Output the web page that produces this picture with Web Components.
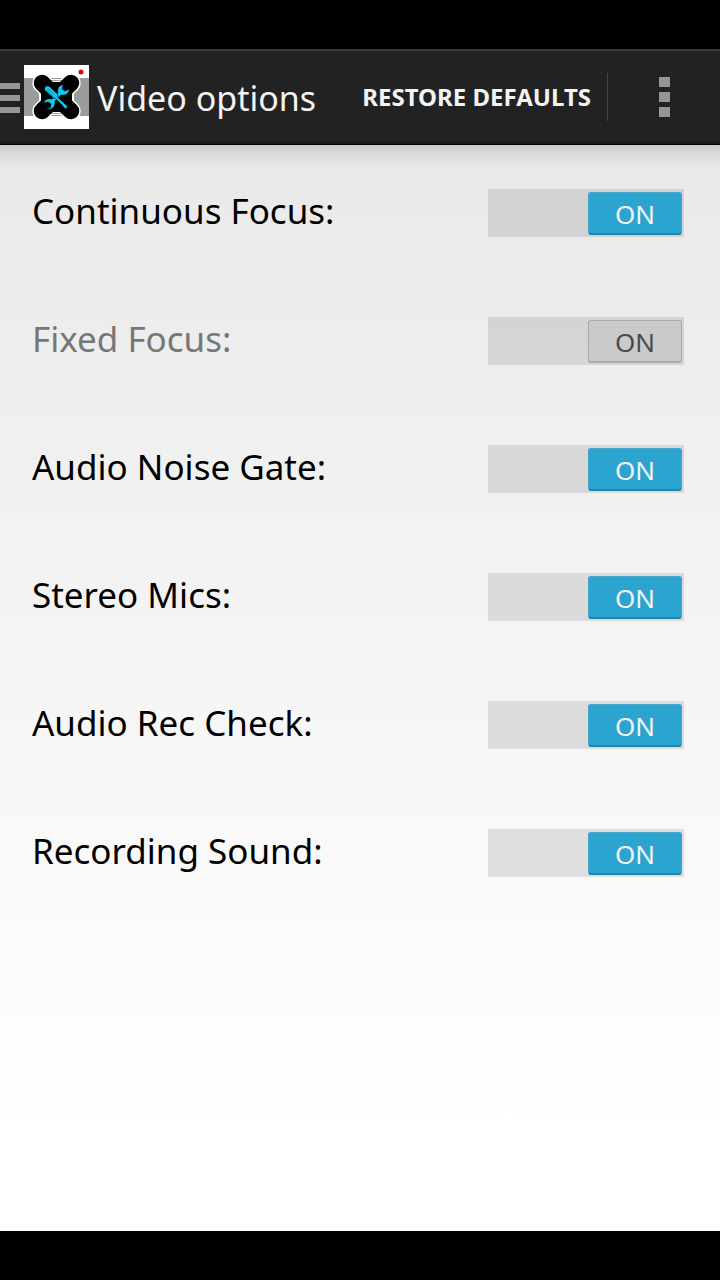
<!DOCTYPE html>
<html lang="en">
<head>
<meta charset="utf-8">
<meta name="viewport" content="width=device-width, initial-scale=1">
<title>Video options</title>
<style>
  html, body { margin: 0; background: #000; }
  body { font-family: "Noto Sans", sans-serif; }
</style>
</head>
<body>
<video-options-screen></video-options-screen>

<script>
class VideoOptionsScreen extends HTMLElement {
  constructor() {
    super();
    this.attachShadow({ mode: "open" }).innerHTML = `
      <style>
        :host { display: flex; flex-direction: column; box-sizing: border-box; min-height: 100vh; padding: 49px 0; background: #000; }
        main { flex: 1; padding: 4px 36px 32px 32px; background: linear-gradient(#0002, #0001 8px, #0000 24px), linear-gradient(#e9e9e9, #ebebeb 8%, #fff 90%); }
      </style>
      <action-bar heading="Video options">
        <app-logo slot="logo"></app-logo>
        <bar-action slot="actions">RESTORE DEFAULTS</bar-action>
        <overflow-button slot="actions"></overflow-button>
      </action-bar>
      <main>
        <option-row checked>Continuous Focus:</option-row>
        <option-row checked disabled>Fixed Focus:</option-row>
        <option-row checked>Audio Noise Gate:</option-row>
        <option-row checked>Stereo Mics:</option-row>
        <option-row checked>Audio Rec Check:</option-row>
        <option-row checked>Recording Sound:</option-row>
      </main>`;
  }
}

class ActionBar extends HTMLElement {
  constructor() {
    super();
    this.attachShadow({ mode: "open" }).innerHTML = `
      <style>
        :host { display: block; }
        header { display: flex; align-items: center; height: 96px; box-sizing: border-box; padding-bottom: 2px; background: #222; border-top: 2px solid #3a3a3a; border-bottom: 1px solid #000; box-shadow: inset 0 -3px 0 #1b1b1b; }
        button { display: flex; align-items: center; padding: 0; border: 0; background: none; }
        .lines { display: grid; gap: 6px; width: 20px; margin-right: 4px; padding-top: 2px; }
        .lines i { height: 6px; background: #969696; }
        h1 { flex: 1; margin: 0 0 0 8px; padding-top: 2px; font-size: 34px; line-height: 48px; font-weight: 400; color: #f3f3f3; white-space: nowrap; }
      </style>
      <header>
        <button type="button" aria-label="Open navigation">
          <span class="lines"><i></i><i></i><i></i></span>
          <slot name="logo"></slot>
        </button>
        <h1></h1>
        <slot name="actions"></slot>
      </header>`;
  }
  connectedCallback() {
    this.shadowRoot.querySelector("h1").textContent = this.getAttribute("heading");
  }
}

class AppLogo extends HTMLElement {
  constructor() {
    super();
    this.attachShadow({ mode: "open" }).innerHTML = `
      <style>
        :host { display: block; width: 65px; height: 64px; }
        svg { display: block; }
      </style>
      <svg width="65" height="64" viewBox="0 0 65 64" aria-hidden="true">
        <rect width="65" height="64" fill="#fff"/>
        <rect y="13" width="65" height="38" fill="#9b9d9c"/>
        <g stroke-linecap="round">
          <path d="M18 18L47 46M47 18L18 46" stroke="#fff" stroke-width="19.5"/>
          <path d="M22 14h21v4l7 6v17l-7 5v4H22v-4l-7-5V24l7-6z" fill="#fff"/>
          <path d="M25 15.500h15M25 48.500h15" stroke="#a5a5a5" stroke-width="1"/>
          <path d="M18 18L47 46M47 18L18 46" stroke="#000" stroke-width="16.500"/>
          <path d="M23 17h19l6 7v16l-6 7H23l-6-7V24z" fill="#000"/>
        </g>
        <g fill="#12c8ee" stroke="#000" stroke-width=".6">
          <path d="M38 20C34 21 33 25 34 28L28 34C24 33 20 35 19.500 38L24 37L27 39L26 43L22 43.500C26 46 31 43 31 38L31 36L37 30C41 31 45 29 45.500 24L41 26L38 24L39.500 20Z"/>
          <path d="M20.500 23Q22 20 25 21L34 29.500L33.500 32L41 39L43.500 41L42.500 44L40 43L38.500 40.500L31.500 33.500L29.500 33L20.500 25Z"/>
        </g>
        <path d="M24.500 23.500L30.500 29.500M23 25L29 31" stroke="#0a7e98" stroke-width=".7"/>
        <circle cx="57" cy="7" r="2.500" fill="#e3000b"/>
      </svg>`;
  }
}

class BarAction extends HTMLElement {
  constructor() {
    super();
    this.attachShadow({ mode: "open" }).innerHTML = `
      <style>
        :host { display: block; border-right: 1px solid #444; }
        button { display: block; height: 48px; padding: 0 16px; border: 0; background: none; color: #f3f3f3; font: 700 24px/48px "Noto Sans", sans-serif; white-space: nowrap; }
      </style>
      <button type="button"><slot></slot></button>`;
  }
}

class OverflowButton extends HTMLElement {
  constructor() {
    super();
    this.attachShadow({ mode: "open" }).innerHTML = `
      <style>
        :host { display: block; }
        button { display: grid; justify-content: center; align-content: center; gap: 5px; width: 112px; height: 64px; padding: 0; border: 0; background: none; }
        i { width: 11px; height: 10px; background: #969696; }
      </style>
      <button type="button" aria-label="More options"><i></i><i></i><i></i></button>`;
  }
}

class OptionRow extends HTMLElement {
  constructor() {
    super();
    this.attachShadow({ mode: "open" }).innerHTML = `
      <style>
        :host { display: block; }
        label { display: flex; align-items: center; justify-content: space-between; height: 128px; color: #000; }
        :host([disabled]) label { color: #777; }
        .name { font-size: 35px; line-height: 48px; padding-bottom: 4px; }
        .track { position: relative; flex: none; box-sizing: border-box; display: flex; width: 196px; height: 48px; padding: 3px 2px 2px; background: #0000001a; }
        input { position: absolute; inset: 0; width: 100%; height: 100%; margin: 0; appearance: none; }
        .thumb { box-sizing: border-box; width: 94px; height: 43px; border-radius: 3px; background: #2ca4d0; border: 1px solid #43a5c8; border-bottom: 2px solid #2484a8; color: #f3f3f3; font-size: 26px; line-height: 42px; text-align: center; }
        input:checked + .thumb { margin-left: auto; }
        input:disabled + .thumb { background: #cacaca; border-color: #aaa; color: #4a4a4a; }
      </style>
      <label>
        <span class="name"><slot></slot></span>
        <span class="track"><input type="checkbox" role="switch"><span class="thumb">ON</span></span>
      </label>`;
    const input = this.shadowRoot.querySelector("input");
    const thumb = this.shadowRoot.querySelector(".thumb");
    input.addEventListener("change", () => { thumb.textContent = input.checked ? "ON" : "OFF"; });
  }
  connectedCallback() {
    const input = this.shadowRoot.querySelector("input");
    input.checked = this.hasAttribute("checked");
    input.disabled = this.hasAttribute("disabled");
  }
}

customElements.define("app-logo", AppLogo);
customElements.define("bar-action", BarAction);
customElements.define("overflow-button", OverflowButton);
customElements.define("action-bar", ActionBar);
customElements.define("option-row", OptionRow);
customElements.define("video-options-screen", VideoOptionsScreen);
</script>
</body>
</html>
